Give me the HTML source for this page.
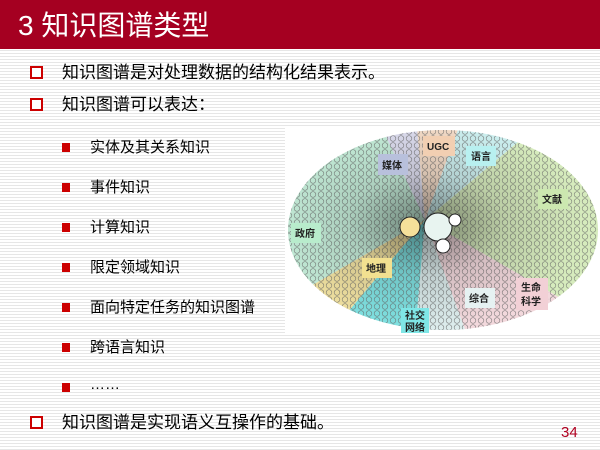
<!DOCTYPE html>
<html><head><meta charset="utf-8"><style>
*{margin:0;padding:0}
html,body{width:600px;height:450px;overflow:hidden}
body{position:relative;font-family:"Liberation Sans","Noto Sans CJK SC",sans-serif;
background:repeating-linear-gradient(to bottom,#fff 0,#fff 2px,#e6e6e6 2px,#e6e6e6 3px);}
.bar{position:absolute;left:0;top:0;width:600px;height:49px;background:#a50021}
.title{position:absolute;left:18px;top:8px;color:#fff;font-size:28px;line-height:36px;white-space:nowrap}
.l1{position:absolute;left:62px;font-size:17px;line-height:20px;color:#000;white-space:nowrap}
.b1{position:absolute;left:30px;width:9px;height:9px;border:2px solid #cc0000;background:#fff}
.l2{position:absolute;left:90px;font-size:15px;line-height:18px;color:#000;white-space:nowrap}
.b2{position:absolute;left:62px;width:8px;height:9px;background:#cc0000}
.num{position:absolute;left:561px;top:424px;color:#b00020;font-size:15px;line-height:18px}
svg{position:absolute;left:285px;top:128px;display:block}
.lab{font-family:"Liberation Sans","Noto Sans CJK SC",sans-serif;font-size:10px;font-weight:bold;fill:#222}
</style></head><body>
<div class="bar"></div>
<div class="title">3 知识图谱类型</div>
<div class="b1" style="top:66px"></div><div class="l1" style="top:63px">知识图谱是对处理数据的结构化结果表示。</div>
<div class="b1" style="top:98px"></div><div class="l1" style="top:95px">知识图谱可以表达：</div>
<div class="b2" style="top:143px"></div><div class="l2" style="top:139px">实体及其关系知识</div>
<div class="b2" style="top:183px"></div><div class="l2" style="top:179px">事件知识</div>
<div class="b2" style="top:223px"></div><div class="l2" style="top:219px">计算知识</div>
<div class="b2" style="top:263px"></div><div class="l2" style="top:259px">限定领域知识</div>
<div class="b2" style="top:303px"></div><div class="l2" style="top:299px">面向特定任务的知识图谱</div>
<div class="b2" style="top:343px"></div><div class="l2" style="top:339px">跨语言知识</div>
<div class="b2" style="top:383px"></div><div class="l2" style="top:376px">……</div>
<div class="b1" style="top:416px"></div><div class="l1" style="top:413px">知识图谱是实现语义互操作的基础。</div>
<div class="num">34</div>
<svg width="315" height="205" viewBox="0 0 315 205">
<defs>
<pattern id="p" width="8" height="7" patternUnits="userSpaceOnUse">
<circle cx="4" cy="3.5" r="2.8" fill="none" stroke="#666" stroke-width="0.6"/>
</pattern>
<radialGradient id="g" cx="0.45" cy="0.47" r="0.5">
<stop offset="0" stop-color="#000" stop-opacity="0.45"/>
<stop offset="0.5" stop-color="#000" stop-opacity="0.12"/>
<stop offset="1" stop-color="#000" stop-opacity="0"/>
</radialGradient>
<clipPath id="c"><ellipse cx="158" cy="102" rx="155" ry="100"/></clipPath>
</defs>
<rect width="315" height="205" fill="#fff"/>
<g clip-path="url(#c)">
<path d="M140 92 L370 -101 L400 242Z" fill="#d6ebbd"/>
<path d="M140 92 L400 242 L243 374Z" fill="#f2d8dc"/>
<path d="M140 92 L243 374 L114 391Z" fill="#dcecec"/>
<path d="M140 92 L114 391 L-53 322Z" fill="#7fe0e0"/>
<path d="M140 92 L-53 322 L-120 242Z" fill="#efe0a0"/>
<path d="M140 92 L-120 242 L-142 -11 L13 -180Z" fill="#c4ecd8"/>
<path d="M140 92 L13 -180 L114 -207Z" fill="#dcdcee"/>
<path d="M140 92 L114 -207 L243 -190Z" fill="#f4dcc8"/>
<path d="M140 92 L243 -190 L370 -101Z" fill="#cdf0f0"/>
<rect width="315" height="205" fill="url(#p)" opacity="0.8"/>
<rect width="315" height="205" fill="url(#g)"/>
</g>
<circle cx="125" cy="99" r="10" fill="#f5e09a" stroke="#222"/>
<circle cx="153" cy="99" r="14" fill="#e8f4f0" stroke="#222"/>
<circle cx="170" cy="92" r="6" fill="#fff" stroke="#222"/>
<circle cx="158" cy="118" r="7" fill="#fff" stroke="#222"/>
<rect x="93" y="26" width="30" height="21" fill="#b8c0dc"/><text class="lab" x="97" y="41">媒体</text>
<rect x="138" y="8" width="32" height="20" fill="#f2cfb2"/><text class="lab" x="142" y="22">UGC</text>
<rect x="181" y="18" width="30" height="20" fill="#b8f0f0"/><text class="lab" x="186" y="32">语言</text>
<rect x="253" y="61" width="30" height="20" fill="#cce8b0"/><text class="lab" x="257" y="75">文献</text>
<rect x="6" y="95" width="30" height="20" fill="#b8eccc"/><text class="lab" x="10" y="109">政府</text>
<rect x="77" y="130" width="30" height="20" fill="#f2e090"/><text class="lab" x="81" y="144">地理</text>
<rect x="180" y="160" width="30" height="20" fill="#e6f2f2"/><text class="lab" x="184" y="174">综合</text>
<rect x="231" y="150" width="32" height="32" fill="#f2d0d6"/><text class="lab" x="236" y="163">生命</text><text class="lab" x="236" y="177">科学</text>
<rect x="116" y="180" width="28" height="28" fill="#7fe6e6"/><text class="lab" x="120" y="191">社交</text><text class="lab" x="120" y="203">网络</text>
</svg>
</body></html>
